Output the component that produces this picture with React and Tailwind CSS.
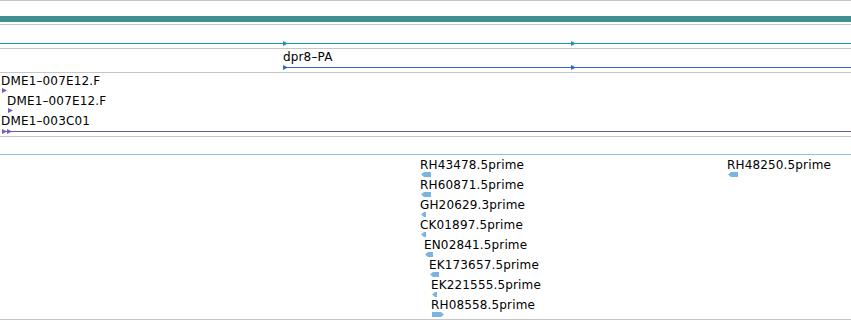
import React from 'react';

const GRAY = 'border-[#c6c6c6]';

// EST features in the left cluster, stacked one per row
const ests = [
  { name: 'RH43478.5prime', ml: 'ml-0', w: 10, dir: 'l' },
  { name: 'RH60871.5prime', ml: 'ml-0', w: 10, dir: 'l' },
  { name: 'GH20629.3prime', ml: 'ml-0', w: 5, dir: 'l' },
  { name: 'CK01897.5prime', ml: 'ml-0', w: 5, dir: 'l' },
  { name: 'EN02841.5prime', ml: 'ml-[4px]', w: 8, dir: 'l' },
  { name: 'EK173657.5prime', ml: 'ml-[9px]', w: 9, dir: 'l' },
  { name: 'EK221555.5prime', ml: 'ml-[11px]', w: 5, dir: 'l' },
  { name: 'RH08558.5prime', ml: 'ml-[11px]', w: 12, dir: 'r' },
];

const Glyph = ({ w, dir }) => {
  const pts =
    dir === 'l'
      ? `0,2.5 3,0 ${w},0 ${w},5 3,5`
      : `0,0 ${w - 3},0 ${w},2.5 ${w - 3},5 0,5`;
  return (
    <svg className="block ml-px" width={w} height="5" viewBox={`0 0 ${w} 5`}>
      <polygon points={pts} fill="#7db4df" />
    </svg>
  );
};

const Arrow = ({ color, className = '' }) => (
  <svg className={`block shrink-0 ${className}`} width="5" height="5" viewBox="0 0 5 5">
    <polygon points="0,0 5,2.5 0,5" fill={color} />
  </svg>
);

const Label = ({ children, className = '' }) => (
  <div className={`whitespace-nowrap text-[12px] leading-[14px] tracking-[0.15px] text-black ${className}`}>
    {children}
  </div>
);

// 1px strand line with direction arrows laid over it
const Strand = ({ color, arrows, className = '' }) => (
  <div className={`relative h-px ${className}`} style={{ backgroundColor: color }}>
    {arrows.map((a) => (
      <div key={a} className={`absolute top-[-2px] ${a}`}>
        <Arrow color={color} />
      </div>
    ))}
  </div>
);

const Est = ({ e }) => (
  <div className={`flex flex-col items-start h-[20px] ${e.ml}`}>
    <Label>{e.name}</Label>
    <Glyph w={e.w} dir={e.dir} />
  </div>
);

export default function App() {
  return (
    <div
      className="w-[851px] h-[320px] bg-white overflow-hidden flex flex-col"
      style={{ fontFamily: '"DejaVu Sans", sans-serif' }}
    >
      {/* gene region bar */}
      <div className={`h-[25px] border-y ${GRAY} pt-[15px]`}>
        <div className="h-[6px] bg-[#418f91]" />
      </div>

      {/* transcript strand */}
      <div className={`h-[24px] border-b ${GRAY} pt-[18px]`}>
        <Strand color="#1b97ab" arrows={['left-[283px]', 'left-[571px]']} />
      </div>

      {/* dpr8-PA */}
      <div className={`h-[24px] border-b ${GRAY} pt-px pl-[283px]`}>
        <Label>dpr8–PA</Label>
        <Strand color="#3467c4" arrows={['left-0', 'left-[288px]']} className="mt-[3px]" />
      </div>

      {/* clones */}
      <div className={`h-[64px] border-b ${GRAY} pt-px flex flex-col`}>
        <Label className="ml-px">DME1–007E12.F</Label>
        <Arrow color="#7a5cb4" className="ml-[2px]" />
        <Label className="ml-[7px] mt-px">DME1–007E12.F</Label>
        <Arrow color="#7a5cb4" className="ml-[8px]" />
        <Label className="ml-px mt-px">DME1–003C01</Label>
        <div className="mt-[3px] ml-[2px] relative h-px bg-[#6f55a3]">
          <div className="absolute top-[-2px] left-0 flex">
            <Arrow color="#7a5cb4" />
            <Arrow color="#7a5cb4" />
          </div>
        </div>
      </div>

      {/* empty track */}
      <div className="h-[18px] border-b border-[#8fbfe2]" />

      {/* ESTs */}
      <div className={`h-[165px] border-b ${GRAY} pt-[3px] grid grid-cols-[727px_1fr]`}>
        <div className="flex flex-col pl-[420px]">
          {ests.map((e) => (
            <Est key={e.name} e={e} />
          ))}
        </div>
        <div className="flex flex-col">
          <Est e={{ name: 'RH48250.5prime', ml: 'ml-0', w: 10, dir: 'l' }} />
        </div>
      </div>
    </div>
  );
}
